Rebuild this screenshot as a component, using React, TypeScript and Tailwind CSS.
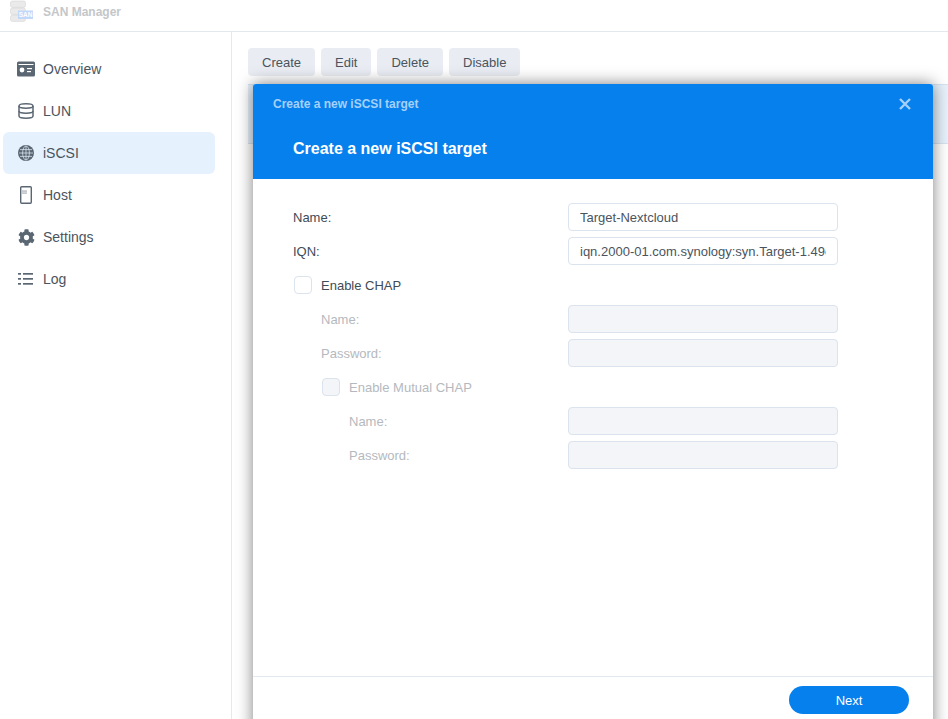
import type { ReactNode } from "react";
import { FaCog } from "react-icons/fa";

const OverviewIcon = () => (
  <svg width="18" height="16" viewBox="0 0 18 16">
    <rect x="0" y="0.5" width="18" height="15" rx="1.5" fill="#5a6672" />
    <rect x="1.5" y="3" width="15" height="1" fill="#fff" />
    <circle cx="5" cy="9" r="2.4" fill="#fff" />
    <rect x="10" y="7" width="5" height="1.2" fill="#fff" />
    <rect x="10" y="10" width="4" height="1.2" fill="#fff" />
  </svg>
);

const LunIcon = () => (
  <svg width="16" height="16" viewBox="0 0 16 16" fill="none" stroke="#5a6672" strokeWidth="1.5">
    <ellipse cx="8" cy="3" rx="7" ry="2.2" />
    <path d="M1 3v10c0 1.3 3 2.2 7 2.2s7-.9 7-2.2V3" />
    <path d="M1 8c0 1.3 3 2.2 7 2.2s7-.9 7-2.2" />
  </svg>
);

const GlobeIcon = () => (
  <svg width="16" height="16" viewBox="0 0 16 16" fill="none">
    <circle cx="8" cy="8" r="8" fill="#5a6672" />
    <g stroke="#e4f0fc" strokeWidth="0.7">
      <ellipse cx="8" cy="8" rx="3.4" ry="7" />
      <path d="M8 1v14M1 8h14M2 4.6h12M2 11.4h12" />
    </g>
  </svg>
);

const HostIcon = () => (
  <svg width="18" height="18" viewBox="0 0 18 18" fill="none">
    <rect x="3.7" y="0.7" width="10.6" height="16.6" rx="1" stroke="#5a6672" strokeWidth="1.4" />
    <rect x="5" y="4.6" width="5" height="0.9" fill="#8a949d" />
    <rect x="5" y="6.6" width="5" height="0.9" fill="#8a949d" />
  </svg>
);

const LogIcon = () => (
  <svg width="16" height="12" viewBox="0 0 16 12" fill="#5a6672">
    <rect x="0" y="0" width="3" height="1.7" />
    <rect x="5" y="0" width="10" height="1.7" />
    <rect x="0" y="5" width="3" height="1.7" />
    <rect x="5" y="5" width="10" height="1.7" />
    <rect x="0" y="10" width="3" height="1.7" />
    <rect x="5" y="10" width="10" height="1.7" />
  </svg>
);

const AppLogo = () => (
  <svg width="24" height="24" viewBox="0 0 24 24" className="opacity-70">
    <rect x="0.5" y="1" width="15" height="6.4" rx="2" fill="#e2e2e2" stroke="#c4c4c4" strokeWidth="0.6" />
    <rect x="0.5" y="8" width="15" height="6.4" rx="2" fill="#e2e2e2" stroke="#c4c4c4" strokeWidth="0.6" />
    <rect x="0.5" y="15" width="15" height="6.4" rx="2" fill="#e2e2e2" stroke="#c4c4c4" strokeWidth="0.6" />
    <rect x="8" y="10.5" width="15" height="8.5" fill="#a9c8f8" />
    <text x="15.5" y="17.2" textAnchor="middle" fontSize="6.5" fontWeight="700" fill="#fff">SAN</text>
  </svg>
);

const navItems: { label: string; icon: ReactNode; active?: boolean }[] = [
  { label: "Overview", icon: <OverviewIcon /> },
  { label: "LUN", icon: <LunIcon /> },
  { label: "iSCSI", icon: <GlobeIcon />, active: true },
  { label: "Host", icon: <HostIcon /> },
  { label: "Settings", icon: <FaCog className="text-[17px] text-[#5a6672]" /> },
  { label: "Log", icon: <LogIcon /> },
];

const FormRow = ({ label, value, disabled, indent }: { label: string; value?: string; disabled?: boolean; indent?: string }) => (
  <div className="flex h-[28px] items-center">
    <span className={`w-[275px] shrink-0 pt-px ${indent ?? ""} ${disabled ? "text-[#b5b9be]" : "text-[#414b55]"}`}>{label}</span>
    <input
      readOnly
      disabled={disabled}
      value={value ?? ""}
      className={`h-[28px] w-[270px] rounded-[4px] border px-[11px] text-[13px] text-[#4a545e] outline-none ${disabled ? "border-[#dbe3ec] bg-[#f3f5f9]" : "border-[#dbe3ec] bg-white"}`}
    />
  </div>
);

const CheckRow = ({ label, disabled, indent }: { label: string; disabled?: boolean; indent?: string }) => (
  <div className={`flex h-[28px] items-center gap-[9px] pl-px ${indent ?? ""}`}>
    <span className={`h-[18px] w-[18px] rounded-[4px] border border-[#dbe3ec] ${disabled ? "bg-[#f3f5f9]" : "bg-white"}`} />
    <span className={`pt-px ${disabled ? "text-[#b5b9be]" : "text-[#414b55]"}`}>{label}</span>
  </div>
);

export default function App() {
  return (
    <div className="relative h-[719px] w-[948px] overflow-hidden bg-white font-['Liberation_Sans',Arial,sans-serif] text-[13px] text-[#414b55]">
      <header className="flex h-[32px] items-start gap-[9px] border-b border-[#e3e7ee] pl-[10px]">
        <AppLogo />
        <span className="mt-[5px] text-[12px] leading-[14px] font-bold text-[#c4c7ca]">SAN Manager</span>
      </header>

      <div className="flex h-[687px]">
        <aside className="w-[232px] shrink-0 border-r border-[#e6e8ec] pt-[16px] pl-[3px]">
          <nav className="flex w-[212px] flex-col">
            {navItems.map((item) => (
              <div
                key={item.label}
                className={`flex h-[42px] items-center rounded-[6px] pl-[14px] text-[14px] ${item.active ? "bg-[#e5f1fd]" : ""}`}
              >
                <span className="flex w-[18px] items-center justify-center">{item.icon}</span>
                <span className="ml-[8px] pt-px text-[#4a545e]">{item.label}</span>
              </div>
            ))}
          </nav>
        </aside>

        <main className="flex-1 pt-[16px]">
          <div className="flex gap-[6px] pl-[16px]">
            {["Create", "Edit", "Delete", "Disable"].map((label) => (
              <button key={label} className="h-[28px] rounded-[4px] bg-[#e9edf3] px-[14px] pt-px text-[13px] text-[#4a545e]">
                {label}
              </button>
            ))}
          </div>
          <div className="mt-[8px] ml-[16px] h-[60px] border-y border-[#d5e3f1] bg-[#e6f1fc]" />
        </main>
      </div>

      <div className="absolute top-[84px] left-[253px] flex h-[652px] w-[680px] flex-col rounded-t-[3px] bg-white shadow-[0_0_16px_rgba(0,0,0,0.5)]">
        <div className="relative h-[95px] shrink-0 rounded-t-[3px] bg-[#0580ed]">
          <span className="absolute top-[13px] left-[20px] text-[12px] leading-[14px] font-bold text-[#a5d0f9]">Create a new iSCSI target</span>
          <svg className="absolute top-[14px] left-[646px]" width="12" height="12" viewBox="0 0 12 12" stroke="#a5d0f9" strokeWidth="2.4" fill="none">
            <path d="M1 1l10 10M11 1L1 11" />
          </svg>
          <h1 className="absolute top-[55px] left-[40px] text-[16px] leading-[20px] font-bold text-white">Create a new iSCSI target</h1>
        </div>

        <div className="flex flex-1 flex-col gap-[6px] pt-[24px] pl-[40px]">
          <FormRow label="Name:" value="Target-Nextcloud" />
          <FormRow label="IQN:" value="iqn.2000-01.com.synology:syn.Target-1.49e5a6f1c2" />
          <CheckRow label="Enable CHAP" />
          <FormRow label="Name:" disabled indent="pl-[28px]" />
          <FormRow label="Password:" disabled indent="pl-[28px]" />
          <CheckRow label="Enable Mutual CHAP" disabled indent="ml-[28px]" />
          <FormRow label="Name:" disabled indent="pl-[56px]" />
          <FormRow label="Password:" disabled indent="pl-[56px]" />
        </div>

        <div className="h-[60px] shrink-0 border-t border-[#e3e9f1] pt-[9px] pr-[24px] text-right">
          <button className="h-[28px] w-[120px] rounded-full bg-[#0580ed] pt-px text-[13px] text-white">Next</button>
        </div>
      </div>
    </div>
  );
}
